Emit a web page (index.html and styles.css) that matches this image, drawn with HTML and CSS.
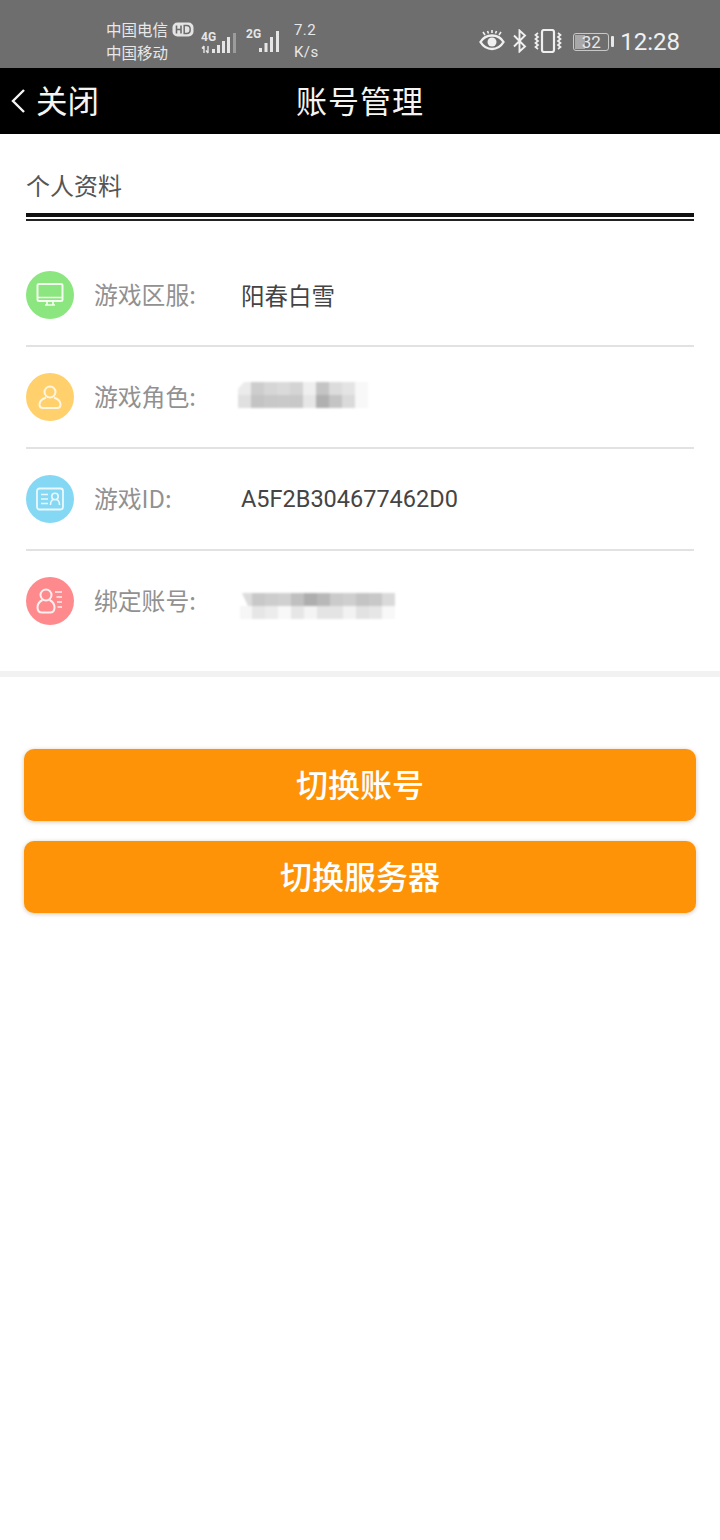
FILE: index.html
```html
<!DOCTYPE html>
<html lang="zh-CN">
<head>
<meta charset="utf-8">
<title>账号管理</title>
<link rel="stylesheet" href="styles.css">
</head>
<body>
<div class="status">
  <div class="carriers">
    <div class="carrier">中国电信<svg class="hd" width="22" height="15" viewBox="0 0 22 15"><rect x="0.5" y="0.5" width="21" height="14" rx="5" fill="#e4e4e4"/><path d="M4.5 3.5v8M9 3.5v8M4.5 7.5H9" stroke="#6e6e6e" stroke-width="1.6" fill="none"/><path d="M12.2 3.5v8h2.6c2.2 0 3.4-1.6 3.4-4s-1.200-4-3.400-4z" stroke="#6e6e6e" stroke-width="1.500" fill="none"/></svg></div>
    <div class="carrier">中国移动</div>
  </div>
  <svg class="signal-a" width="38" height="26" viewBox="0 0 38 26">
    <text x="0" y="12" class="net">4G</text>
    <path d="M3 17v7M1 19.500l2-2.500M7 17v7M5 21.500l2 2.500" stroke="#e6e6e6" stroke-width="1.400" fill="none"/>
    <rect x="11" y="20" width="3" height="4" fill="#e6e6e6"/>
    <rect x="16" y="16" width="3" height="8" fill="#e6e6e6"/>
    <rect x="21" y="12" width="3" height="12" fill="#e6e6e6"/>
    <rect x="26" y="8" width="3" height="16" fill="#e6e6e6"/>
    <rect x="32" y="4" width="3" height="20" fill="#9c9c9c"/>
  </svg>
  <svg class="signal-b" width="36" height="26" viewBox="0 0 36 26">
    <text x="0" y="10" class="net">2G</text>
    <rect x="13" y="20" width="3" height="4" fill="#e6e6e6"/>
    <rect x="18.500" y="15" width="3" height="9" fill="#e6e6e6"/>
    <rect x="24" y="9" width="3" height="15" fill="#e6e6e6"/>
    <rect x="30" y="3" width="3" height="21" fill="#e6e6e6"/>
  </svg>
  <div class="speed"><span>7.2</span><span>K/s</span></div>
  <div class="status-right">
    <svg class="eye" width="26" height="22" viewBox="0 0 26 22">
      <path d="M1.500 13c3-5 7-6.500 11.500-6.500S21.500 8 24.500 13C21.500 18 17.500 20 13 20S4.500 18 1.500 13z" fill="none" stroke="#f0f0f0" stroke-width="2.400"/>
      <circle cx="13" cy="13" r="4.500" fill="#f0f0f0"/>
      <path d="M6 6L4 3M13 4V1M20 6l2-3M9.500 4.500L8.500 2M16.500 4.500l1-2.500" stroke="#f0f0f0" stroke-width="1.600"/>
    </svg>
    <svg class="bt" width="15" height="24" viewBox="0 0 15 24">
      <path d="M2 6.500l11 11-5.500 5V1.500l5.500 5-11 11" fill="none" stroke="#f0f0f0" stroke-width="1.900"/>
    </svg>
    <svg class="vibrate" width="30" height="24" viewBox="0 0 30 24">
      <rect x="9" y="1" width="12" height="22" rx="2" fill="none" stroke="#f0f0f0" stroke-width="2.200"/>
      <path d="M5 4l-2.500 2 2.500 2-2.500 2 2.500 2-2.500 2 2.500 2-2.500 2 2.500 2M25 4l2.500 2-2.500 2 2.500 2-2.500 2 2.500 2-2.500 2 2.500 2-2.500 2" fill="none" stroke="#f0f0f0" stroke-width="1.700"/>
    </svg>
    <div class="battery">
      <div class="battery-box"><span class="battery-fill"></span><span class="battery-num">32</span></div>
      <span class="battery-tip"></span>
    </div>
    <div class="clock">12:28</div>
  </div>
</div>

<header class="topbar">
  <div class="back">
    <svg width="16" height="26" viewBox="0 0 16 26"><path d="M14 2L3 13l11 11" fill="none" stroke="#f4f4f4" stroke-width="2.400"/></svg>
    <span class="back-text">关闭</span>
  </div>
  <h1 class="title">账号管理</h1>
</header>

<section class="profile">
  <h2 class="section-title">个人资料</h2>
  <div class="double-rule"></div>
  <div class="row">
    <span class="badge badge-green">
      <svg width="28" height="26" viewBox="0 0 28 26"><rect x="1.500" y="2" width="25" height="17" rx="1.500" fill="none" stroke="#f3fbef" stroke-width="2"/><path d="M2 15.500h24M11 19.500v3M17 19.500v3M9 23h10" stroke="#f3fbef" stroke-width="1.700" fill="none"/></svg>
    </span>
    <span class="label">游戏区服:</span>
    <span class="value">阳春白雪</span>
  </div>
  <div class="row">
    <span class="badge badge-yellow">
      <svg width="26" height="26" viewBox="0 0 26 26"><circle cx="13" cy="8" r="5.500" fill="none" stroke="#fff6e2" stroke-width="2"/><path d="M9 13.500C5 15 2.500 17.500 2.500 20.500c0 2 1 3.500 3.500 3.500h14c2.500 0 3.500-1.500 3.500-3.500 0-3-2.500-5.500-6.500-7" fill="none" stroke="#fff6e2" stroke-width="2"/></svg>
    </span>
    <span class="label">游戏角色:</span>
    <svg class="mosaic mosaic-role" width="136" height="40" viewBox="0 0 136 40">
      <path d="M6 13h7v13H0V20z" fill="#ebebeb"/>
      <rect y="26" width="13" height="13" fill="#e0e0e0"/>
      <rect x="13" y="13" width="13" height="13" fill="#cdcdcd"/>
      <rect x="13" y="26" width="13" height="13" fill="#c4c4c4"/>
      <rect x="26" y="13" width="13" height="13" fill="#d6d6d6"/>
      <rect x="26" y="26" width="13" height="13" fill="#c8c8c8"/>
      <rect x="39" y="13" width="13" height="13" fill="#dadada"/>
      <rect x="39" y="26" width="13" height="13" fill="#c9c9c9"/>
      <rect x="52" y="13" width="13" height="13" fill="#d4d4d4"/>
      <rect x="52" y="26" width="13" height="13" fill="#c8c8c8"/>
      <rect x="65" y="13" width="13" height="13" fill="#efefef"/>
      <rect x="65" y="26" width="13" height="13" fill="#e6e6e6"/>
      <rect x="78" y="13" width="13" height="13" fill="#c4c4c4"/>
      <rect x="78" y="26" width="13" height="13" fill="#b0b0b0"/>
      <rect x="91" y="13" width="13" height="13" fill="#dcdcdc"/>
      <rect x="91" y="26" width="13" height="13" fill="#c4c4c4"/>
      <rect x="104" y="13" width="13" height="13" fill="#e4e4e4"/>
      <rect x="104" y="26" width="13" height="13" fill="#dadada"/>
      <rect x="117" y="13" width="13" height="26" fill="#f8f8f8"/>
    </svg>
  </div>
  <div class="row">
    <span class="badge badge-blue">
      <svg width="28" height="24" viewBox="0 0 28 24"><rect x="1" y="1.500" width="26" height="21" rx="2.500" fill="none" stroke="#eaf8fd" stroke-width="1.800"/><path d="M5 7.500h7M5 12h7M5 16.500h7" stroke="#eaf8fd" stroke-width="1.700" fill="none"/><circle cx="19" cy="9.500" r="3.200" fill="none" stroke="#eaf8fd" stroke-width="1.600"/><path d="M14.500 18c0-3 1.500-5 3-5.500M23.500 18c0-3-1.500-5-3-5.500" stroke="#eaf8fd" stroke-width="1.600" fill="none"/></svg>
    </span>
    <span class="label">游戏ID:</span>
    <span class="value value-latin">A5F2B304677462D0</span>
  </div>
  <div class="row">
    <span class="badge badge-red">
      <svg width="28" height="28" viewBox="0 0 28 28"><circle cx="10" cy="8" r="5.500" fill="none" stroke="#fff0f0" stroke-width="2"/><path d="M6.500 13C3.500 14.500 1.500 17 1.500 20.500c0 3 1.500 5 4.500 5h8c3 0 4.500-2 4.500-5 0-3.500-2-6-5-7.500" fill="none" stroke="#fff0f0" stroke-width="2"/><path d="M19 5h7M20.500 10h5.500M21 15h5M21.500 20h4.500" stroke="#fff0f0" stroke-width="1.700" fill="none"/></svg>
    </span>
    <span class="label">绑定账号:</span>
    <svg class="mosaic mosaic-account" width="160" height="44" viewBox="0 0 160 44">
      <path d="M2 4h10v13H8z" fill="#dcdcdc"/>
      <rect x="12" y="4" width="13" height="13" fill="#c8c8c8"/>
      <rect x="25" y="4" width="13" height="13" fill="#cdcdcd"/>
      <rect x="38" y="4" width="13" height="13" fill="#d0d0d0"/>
      <rect x="51" y="4" width="13" height="13" fill="#c0c0c0"/>
      <rect x="64" y="4" width="13" height="13" fill="#aeaeae"/>
      <rect x="77" y="4" width="13" height="13" fill="#b8b8b8"/>
      <rect x="90" y="4" width="13" height="13" fill="#cbcbcb"/>
      <rect x="103" y="4" width="13" height="13" fill="#cfcfcf"/>
      <rect x="116" y="4" width="13" height="13" fill="#c4c4c4"/>
      <rect x="129" y="4" width="13" height="13" fill="#c8c8c8"/>
      <rect x="142" y="4" width="13" height="13" fill="#dadada"/>
      <rect x="0" y="17" width="12" height="13" fill="#f6f6f6"/>
      <rect x="12" y="17" width="13" height="13" fill="#e6e6e6"/>
      <rect x="25" y="17" width="13" height="13" fill="#ececec"/>
      <rect x="38" y="17" width="13" height="13" fill="#f8f8f8"/>
      <rect x="51" y="17" width="13" height="13" fill="#e6e6e6"/>
      <rect x="64" y="17" width="13" height="13" fill="#f4f4f4"/>
      <rect x="77" y="17" width="26" height="13" fill="#e4e4e4"/>
      <rect x="103" y="17" width="13" height="13" fill="#f2f2f2"/>
      <rect x="116" y="17" width="13" height="13" fill="#e2e2e2"/>
      <rect x="129" y="17" width="13" height="13" fill="#e6e6e6"/>
      <rect x="142" y="17" width="13" height="13" fill="#f8f8f8"/>
    </svg>
  </div>
</section>

<div class="band"></div>

<div class="actions">
  <button class="action" type="button">切换账号</button>
  <button class="action" type="button">切换服务器</button>
</div>
</body>
</html>
```
FILE: styles.css
```css
* { box-sizing: border-box; }

html, body { margin: 0; padding: 0; }

body {
  width: 720px;
  height: 1540px;
  background: #fff;
  overflow: hidden;
  font-family: "Noto Sans CJK SC", "Roboto", sans-serif;
}

/* system bar */
.status {
  height: 68px;
  background: #6e6e6e;
  display: flex;
  align-items: center;
  padding: 15px 40px 0 106px;
  color: #e8e8e8;
}

.carriers { width: 94px; display: flex; flex-direction: column; margin-top: -2px; }

.carrier {
  height: 23px;
  font-size: 15.500px;
  line-height: 23px;
  display: flex;
  align-items: center;
  gap: 4px;
}

.signal-a { margin-left: 1px; }
.signal-b { margin-left: 7px; margin-top: -2px; }

.net {
  font-family: "Roboto", sans-serif;
  font-size: 12px;
  font-weight: 700;
  fill: #e6e6e6;
}

.speed {
  margin-left: 12px;
  margin-top: -1px;
  display: flex;
  flex-direction: column;
  font-family: "Roboto", sans-serif;
  font-size: 15px;
  line-height: 22px;
  letter-spacing: 0.4px;
}

.status-right {
  margin-left: auto;
  display: flex;
  align-items: center;
}

.eye { margin-right: 7px; margin-top: -4px; }
.bt { margin-right: 6px; margin-top: -2px; }
.vibrate { margin-right: 10px; margin-top: -2px; }

.battery { display: flex; align-items: center; gap: 2px; }

.battery-box {
  position: relative;
  width: 36px;
  height: 18px;
  border: 1px solid #c8c8c8;
  border-radius: 3px;
}

.battery-fill {
  position: absolute;
  left: 1px;
  top: 1px;
  bottom: 1px;
  width: 10px;
  background: #a8a8a8;
}

.battery-num {
  position: absolute;
  inset: 0;
  text-align: center;
  font-family: "Roboto", sans-serif;
  font-size: 17px;
  line-height: 16px;
  color: #e8e8e8;
}

.battery-tip { width: 3px; height: 11px; background: #e8e8e8; border-radius: 1px; }

.clock {
  margin-left: 6px;
  font-family: "Roboto", sans-serif;
  font-size: 24px;
  line-height: 30px;
  color: #f0f0f0;
}

/* app header */
.topbar {
  position: relative;
  height: 66px;
  background: #000;
  display: flex;
  align-items: center;
  justify-content: center;
  padding-bottom: 3px;
  color: #f4f4f4;
}

.back {
  position: absolute;
  left: 10px;
  top: 0;
  bottom: 0;
  display: flex;
  align-items: center;
  gap: 10px;
  font-size: 31.500px;
}

.back-text { margin-top: -4px; }

.title { margin: 0; font-size: 31px; font-weight: 400; letter-spacing: 1px; }

/* profile list */
.profile { padding: 0 26px; height: 537px; }

.section-title {
  margin: 0;
  height: 79px;
  padding-top: 32px;
  font-size: 24px;
  line-height: 38px;
  font-weight: 400;
  color: #555;
}

.double-rule {
  height: 8px;
  border-top: 4px solid #111;
  border-bottom: 2.500px solid #222;
}

.row {
  height: 102px;
  display: flex;
  align-items: center;
  position: relative;
  border-bottom: 2px solid #e2e2e2;
}

.row:last-child { border-bottom-color: transparent; }

.double-rule + .row { height: 126px; padding-top: 24px; }

.badge {
  flex: none;
  width: 48px;
  height: 48px;
  border-radius: 50%;
  display: flex;
  align-items: center;
  justify-content: center;
}

.badge-green { background: #8be67f; }
.badge-yellow { background: #ffd06b; }
.badge-blue { background: #84d8f4; }
.badge-red { background: #ff8a8d; }

.label {
  margin-left: 20px;
  margin-bottom: 4px;
  width: 147px;
  font-size: 23.800px;
  color: #919191;
}

.value { font-size: 23.500px; color: #444; }
.value-latin { font-family: "Roboto", sans-serif; }

.mosaic { position: absolute; filter: blur(0.8px); }
.mosaic-role { left: 212px; top: 22px; }
.mosaic-account { left: 214px; top: 38px; }

.band { height: 6px; background: #f2f2f2; }

/* buttons */
.actions {
  padding: 72px 24px 0;
  display: flex;
  flex-direction: column;
  gap: 20px;
}

.action {
  height: 72px;
  border: 0;
  border-radius: 10px;
  background: #ff9307;
  box-shadow: 0 1px 4px rgba(120, 90, 40, 0.35);
  color: #fff;
  font-family: inherit;
  font-size: 32px;
  font-weight: 500;
  padding: 0 0 4px;
}
```
